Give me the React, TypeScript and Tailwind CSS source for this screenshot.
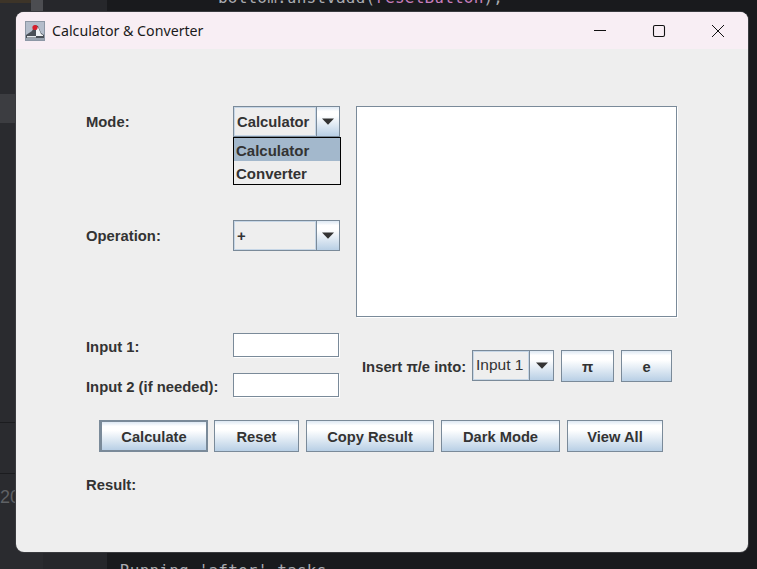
const uiFont = { fontFamily: '"Liberation Sans", Arial, sans-serif' };

const btnGradient =
  "bg-[linear-gradient(to_bottom,#dde8f3_0%,#ffffff_15%,#ffffff_30%,#b8cfe5_100%)]";

const Arrow = () => (
  <svg width="12" height="7" viewBox="0 0 12 7">
    <path d="M0 0.5h12L6 6.8z" fill="#333333" />
  </svg>
);

const Combo = ({
  label,
  width,
  height,
  arrowWidth = 23,
  textClass = "pt-[1px] pl-[2px] text-[14.8px] font-bold",
}: {
  label: string;
  width: string;
  height: string;
  arrowWidth?: number;
  textClass?: string;
}) => (
  <div className={`flex border border-[#7a8a99] ${width} ${height} shrink-0`}>
    <div className={`flex flex-1 items-center border border-[#c6d6e6] leading-none text-[#333333] ${textClass}`}>
      {label}
    </div>
    <div
      className={`flex items-center justify-center border-l border-[#7a8a99] ${btnGradient}`}
      style={{ width: arrowWidth }}
    >
      <Arrow />
    </div>
  </div>
);

const Btn = ({ label, width, focused }: { label: string; width: string; focused?: boolean }) => (
  <button
    className={`flex h-[32px] shrink-0 items-center justify-center border border-[#7a8a99] pt-[2px] text-[14.7px] font-bold text-[#333333] ${btnGradient} ${width} ${focused ? "border-2 border-l-[3px]" : ""}`}
  >
    {label}
  </button>
);

const Field = () => (
  <div className="h-[24px] w-[106px] border border-[#7a8a99] bg-white shadow-[1px_1px_0_#ffffff]" />
);

const Label = ({ children, width, className }: { children: string; width?: string; className?: string }) => (
  <div className={`shrink-0 text-[14.8px] leading-[20px] font-bold text-[#333333] ${width ?? ""} ${className ?? ""}`}>
    {children}
  </div>
);

const JavaIcon = () => (
  <svg width="20" height="20" viewBox="0 0 20 20">
    <rect x="0.5" y="0.5" width="19" height="19" fill="#b4bdcb" stroke="#8d97a5" />
    <path d="M1 14l6-4 3-6 3 1 3 7 3 2v5H1z" fill="#4a4f57" />
    <path d="M11 7l2-1 3 7 2 1v1h-7z" fill="#f0f2f5" />
    <path d="M2 15h9v1.5H2z" fill="#e4e7ec" />
    <path d="M1 17h18v2H1z" fill="#9aa3af" />
    <circle cx="10" cy="6.5" r="2.6" fill="#d81e2c" />
  </svg>
);

export default function App() {
  return (
    <div className="relative h-[569px] w-[757px] overflow-hidden bg-[#1e1f22]" style={uiFont}>
      {/* ide behind the window */}
      <div className="flex h-full">
        <div className="flex w-[31px] flex-col bg-[#2a2b2f]">
          <div className="h-[3px] bg-[#3d3428]" />
          <div className="mt-[91px] h-[29px] bg-[#3c3d41]" />
          <div className="mt-[299px] h-px bg-[#1b1c1f]" />
          <div className="mt-[50px] h-px bg-[#1b1c1f]" />
          <div className="mt-[10px] font-['Liberation_Sans',sans-serif] text-[18px] text-[#5f6165]">20</div>
        </div>
        <div className="w-[12px] bg-[linear-gradient(to_bottom,#4c4d51_0px,#4c4d51_14px,#2a2b2f_14px)]" />
        <div className="w-[64px] bg-[#26272b]" />
        <div className="flex flex-1 flex-col justify-between bg-[#191a1d] pl-[13px] font-['DejaVu_Sans_Mono',monospace] text-[16px] tracking-[0.2px] text-[#a9abb0]">
          <div className="-mt-[14px] ml-[98px] whitespace-pre">
            bottom.unstvadd(<span className="text-[#c77dbb]">resetButton</span>);
          </div>
          <div className="-mb-[14px] whitespace-pre">Running 'after' tasks</div>
        </div>
      </div>

      {/* window */}
      <div className="absolute top-[12px] left-[16px] flex h-[540px] w-[732px] flex-col overflow-hidden rounded-[8px] bg-[#eeeeee] shadow-[0_0_0_1px_#3a3b3f]">
        <div className="flex h-[37px] shrink-0 items-center bg-[#f8eef4] pl-[9px]">
          <JavaIcon />
          <div className="ml-[7px] flex-1 font-['Noto_Sans',sans-serif] text-[14.2px] text-[#1a1a1a]">
            Calculator &amp; Converter
          </div>
          <div className="flex items-center pr-[1px]">
            <div className="flex w-[59px] justify-center">
              <svg width="14" height="14" viewBox="0 0 14 14">
                <path d="M1 6.5h12" stroke="#111" strokeWidth="1" />
              </svg>
            </div>
            <div className="flex w-[59px] justify-center">
              <svg width="14" height="14" viewBox="0 0 14 14">
                <rect x="1.5" y="1.5" width="11" height="11" rx="1.5" fill="none" stroke="#111" strokeWidth="1.1" />
              </svg>
            </div>
            <div className="flex w-[59px] justify-center">
              <svg width="14" height="14" viewBox="0 0 14 14">
                <path d="M1 1l12 12M13 1L1 13" stroke="#111" strokeWidth="1" />
              </svg>
            </div>
          </div>
        </div>

        <div className="flex flex-col pt-[57px] pl-[70px]">
          {/* top section */}
          <div className="flex h-[211px]">
            <div className="mr-[16px] flex w-[254px] flex-col">
              <div className="relative flex h-[31px] items-center">
                <Label width="w-[147px]" className="h-[24px] pt-[2px]">Mode:</Label>
                <Combo label="Calculator" width="w-[107px]" height="h-[31px]" />
                <div className="absolute top-[31px] left-[147px] z-10 w-[108px] border border-black bg-[#eeeeee] text-[15px] font-bold text-[#333333]">
                  <div className="flex h-[23px] items-center bg-[#a3b8cc] pt-[3px] pl-[2px]">Calculator</div>
                  <div className="flex h-[23px] items-center pt-[3px] pl-[2px]">Converter</div>
                </div>
              </div>
              <div className="mt-[83px] flex h-[31px] items-center">
                <Label width="w-[147px]" className="h-[24px] pt-[2px]">Operation:</Label>
                <Combo label="+" width="w-[107px]" height="h-[31px]" />
              </div>
            </div>
            <div className="h-[211px] w-[321px] border border-[#7a8a99] bg-white shadow-[1px_1px_0_#ffffff]" />
          </div>

          {/* inputs */}
          <div className="mt-[16px] flex">
            <div className="flex w-[253px] flex-col gap-[16px]">
              <div className="flex items-center">
                <Label width="w-[147px]" className="h-[24px] pt-[4px]">Input 1:</Label>
                <Field />
              </div>
              <div className="flex items-center">
                <Label width="w-[147px]" className="h-[24px] pt-[4px]">Input 2 (if needed):</Label>
                <Field />
              </div>
            </div>
            <div className="mt-[17px] ml-[23px] flex h-[32px] items-start">
              <div className="mr-[6px] flex h-[32px] w-[104px] shrink-0 items-center pt-[2px] text-[14.8px] font-bold whitespace-nowrap text-[#333333]">
                Insert π/e into:
              </div>
              <Combo
                label="Input 1"
                width="w-[82px]"
                height="h-[31px]"
                textClass="pb-[2px] pl-[2px] text-[15.5px] font-medium"
                arrowWidth={24}
              />
              <div className="ml-[7px] flex gap-[7px]">
                <Btn label="π" width="w-[53px]" />
                <Btn label="e" width="w-[51px]" />
              </div>
            </div>
          </div>

          {/* action buttons */}
          <div className="mt-[23px] ml-[13px] flex gap-[7px]">
            <Btn label="Calculate" width="w-[109px] mr-[-1px]" focused />
            <Btn label="Reset" width="w-[85px]" />
            <Btn label="Copy Result" width="w-[128px]" />
            <Btn label="Dark Mode" width="w-[119px]" />
            <Btn label="View All" width="w-[96px]" />
          </div>

          <div className="mt-[23px]">
            <Label>Result:</Label>
          </div>
        </div>
      </div>
    </div>
  );
}
